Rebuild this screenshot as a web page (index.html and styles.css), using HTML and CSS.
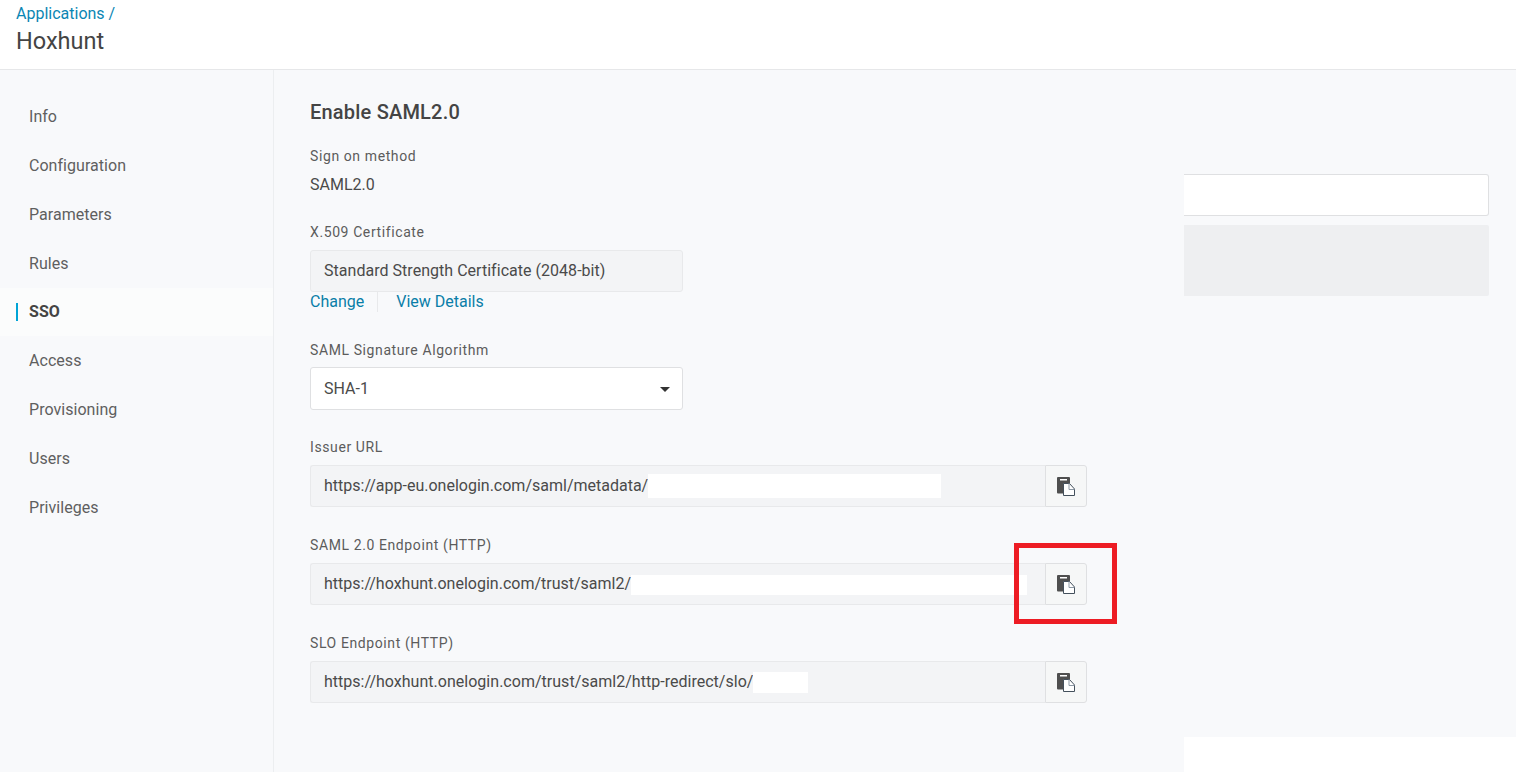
FILE: index.html
```html
<!DOCTYPE html>
<html lang="en">
<head>
<meta charset="utf-8">
<title>Hoxhunt - SSO</title>
<link rel="stylesheet" href="styles.css">
</head>
<body>
<header class="topbar">
  <a class="crumb">Applications /</a>
  <h1 class="app-title">Hoxhunt</h1>
</header>
<div class="layout">
  <nav class="sidebar">
    <a class="nav-item">Info</a>
    <a class="nav-item">Configuration</a>
    <a class="nav-item">Parameters</a>
    <a class="nav-item">Rules</a>
    <a class="nav-item active">SSO</a>
    <a class="nav-item">Access</a>
    <a class="nav-item">Provisioning</a>
    <a class="nav-item">Users</a>
    <a class="nav-item">Privileges</a>
  </nav>
  <main class="main">
    <h2 class="heading">Enable SAML2.0</h2>
    <div class="label">Sign on method</div>
    <div class="value">SAML2.0</div>

    <div class="label">X.509 Certificate</div>
    <div class="readonly cert">Standard Strength Certificate (2048-bit)</div>
    <div class="links">
      <a class="link">Change</a>
      <a class="link link-second">View Details</a>
    </div>

    <div class="label">SAML Signature Algorithm</div>
    <div class="select">SHA-1<span class="caret"></span></div>

    <div class="label">Issuer URL</div>
    <div class="copy-row">
      <div class="readonly url">https://app-eu.onelogin.com/saml/metadata/<span class="mask mask-issuer"></span></div>
      <button class="copy-btn" type="button">
        <svg class="copy-icon" viewBox="0 0 18 19"><path class="ic-back" d="M1 0h11a1 1 0 0 1 1 1v15.500H1a1 1 0 0 1-1-1V1a1 1 0 0 1 1-1z"/><rect class="ic-slot" x="3" y="2" width="7" height="1.500"/><path class="ic-doc" d="M6.500 6.500h6l5 5.500v6.500h-11z"/><path class="ic-fold" d="M12 6.500v6h5.500"/></svg>
      </button>
    </div>

    <div class="label">SAML 2.0 Endpoint (HTTP)</div>
    <div class="copy-row">
      <div class="readonly url">https://hoxhunt.onelogin.com/trust/saml2/<span class="mask mask-saml"></span></div>
      <button class="copy-btn" type="button">
        <svg class="copy-icon" viewBox="0 0 18 19"><path class="ic-back" d="M1 0h11a1 1 0 0 1 1 1v15.500H1a1 1 0 0 1-1-1V1a1 1 0 0 1 1-1z"/><rect class="ic-slot" x="3" y="2" width="7" height="1.500"/><path class="ic-doc" d="M6.500 6.500h6l5 5.500v6.500h-11z"/><path class="ic-fold" d="M12 6.500v6h5.500"/></svg>
      </button>
      <span class="highlight"></span>
    </div>

    <div class="label">SLO Endpoint (HTTP)</div>
    <div class="copy-row">
      <div class="readonly url url-long">https://hoxhunt.onelogin.com/trust/saml2/http-redirect/slo/<span class="mask mask-slo"></span></div>
      <button class="copy-btn" type="button">
        <svg class="copy-icon" viewBox="0 0 18 19"><path class="ic-back" d="M1 0h11a1 1 0 0 1 1 1v15.500H1a1 1 0 0 1-1-1V1a1 1 0 0 1 1-1z"/><rect class="ic-slot" x="3" y="2" width="7" height="1.500"/><path class="ic-doc" d="M6.500 6.500h6l5 5.500v6.500h-11z"/><path class="ic-fold" d="M12 6.500v6h5.500"/></svg>
      </button>
    </div>
  </main>
  <aside class="side">
    <div class="side-cards">
      <div class="side-input"></div>
      <div class="side-grey"></div>
    </div>
    <div class="side-foot"></div>
  </aside>
</div>
</body>
</html>
```

FILE: styles.css
```css
* { box-sizing: border-box; }
html, body { margin: 0; height: 100%; overflow: hidden; }
body {
  width: 1516px;
  height: 772px;
  background: #f8f9fb;
  font-family: Roboto, "Liberation Sans", sans-serif;
  font-size: 16px;
  color: #4a4a4a;
  display: flex;
  flex-direction: column;
}

.topbar {
  height: 70px;
  flex: none;
  background: #fff;
  border-bottom: 1px solid #e6e7e9;
  padding: 4px 16px 0;
}
.crumb {
  display: block;
  height: 19px;
  line-height: 19px;
  color: #0a86b4;
}
.app-title {
  margin: 4px 0 0;
  font-size: 23.5px;
  line-height: 28px;
  font-weight: 400;
  color: #444;
}

.layout { flex: 1; display: flex; min-height: 0; }

.sidebar {
  width: 274px;
  flex: none;
  padding-top: 22px;
  border-right: 1px solid #eceef0;
  display: flex;
  flex-direction: column;
}
.nav-item {
  height: 49px;
  line-height: 49px;
  padding-left: 29px;
  color: #5f5f5f;
  letter-spacing: 0.04px;
  position: relative;
}
.nav-item.active {
  height: 48px;
  line-height: 48px;
  font-weight: 700;
  color: #444;
  background: #fbfcfc;
}
.nav-item.active::before {
  content: "";
  position: absolute;
  left: 16px;
  top: 15px;
  width: 2px;
  height: 18px;
  background: #00a4d6;
}

.main {
  width: 813px;
  flex: none;
  padding: 30px 0 0 36px;
}
.heading {
  margin: 0 0 22px;
  font-size: 20px;
  line-height: 24px;
  font-weight: 500;
  letter-spacing: 0.2px;
  color: #444;
}
.label {
  height: 20px;
  line-height: 20px;
  font-size: 14px;
  letter-spacing: 0.6px;
  color: #5c5c5c;
  margin-bottom: 8px;
}
.value {
  height: 20px;
  line-height: 22px;
  margin-bottom: 28px;
}
.readonly {
  height: 42px;
  line-height: 40px;
  padding: 0 13px;
  background: #f3f4f6;
  border: 1px solid #e8e9eb;
  white-space: nowrap;
}
.cert { width: 373px; border-radius: 3px; letter-spacing: 0.03px; }
.links {
  display: flex;
  height: 18px;
  line-height: 20px;
  margin-bottom: 30px;
}
.link { color: #0a7ea8; }
.link-second {
  margin-left: 13px;
  padding-left: 18px;
  height: 20px;
  border-left: 1px solid #e8e9eb;
}
.select {
  width: 373px;
  height: 43px;
  line-height: 41px;
  padding: 0 13px;
  background: #fff;
  border: 1px solid #dfe0e2;
  border-radius: 3px;
  margin-bottom: 27px;
  margin-top: -1px;
  position: relative;
}
.caret {
  position: absolute;
  right: 12px;
  top: 19px;
  border-left: 5.5px solid transparent;
  border-right: 5.5px solid transparent;
  border-top: 5.5px solid #333;
}

.copy-row {
  display: flex;
  width: 777px;
  height: 42px;
  margin-bottom: 28px;
  position: relative;
}
.url {
  flex: 1;
  border-right: 0;
  border-radius: 3px 0 0 3px;
  display: flex;
  align-items: center;
}
.url-long { letter-spacing: 0.02px; }
.mask { display: block; background: #fff; flex: none; }
.mask-issuer { width: 293px; height: 24px; }
.mask-saml { width: 396px; height: 20px; margin-top: 2px; }
.mask-slo { width: 55px; height: 21px; }
.copy-btn {
  width: 42px;
  height: 42px;
  flex: none;
  padding: 0;
  background: #f6f7f7;
  border: 1px solid #dfe0e2;
  border-radius: 0 3px 3px 0;
  display: flex;
  align-items: center;
  justify-content: center;
}
.copy-icon { width: 18px; height: 19px; display: block; }
.ic-back { fill: #4f4f4f; }
.ic-slot { fill: #fff; }
.ic-doc { fill: #fff; stroke: #44505c; stroke-width: 1; }
.ic-fold { fill: none; stroke: #8d99a5; stroke-width: 1; }
.highlight {
  position: absolute;
  left: 704px;
  top: -20px;
  width: 103px;
  height: 81px;
  border: 5px solid #ed1c24;
}

.side {
  flex: 1;
  display: flex;
  flex-direction: column;
  justify-content: space-between;
  margin-left: 97px;
}
.side-cards { padding: 104px 27px 0 0; }
.side-input {
  height: 42px;
  background: #fff;
  border: 1px solid #dfe0e2;
  border-left: 0;
  border-radius: 0 3px 3px 0;
  margin-bottom: 9px;
}
.side-grey {
  height: 71px;
  background: #eeeff1;
  border-radius: 0 2px 2px 0;
}
.side-foot { height: 35px; background: #fff; }
```
